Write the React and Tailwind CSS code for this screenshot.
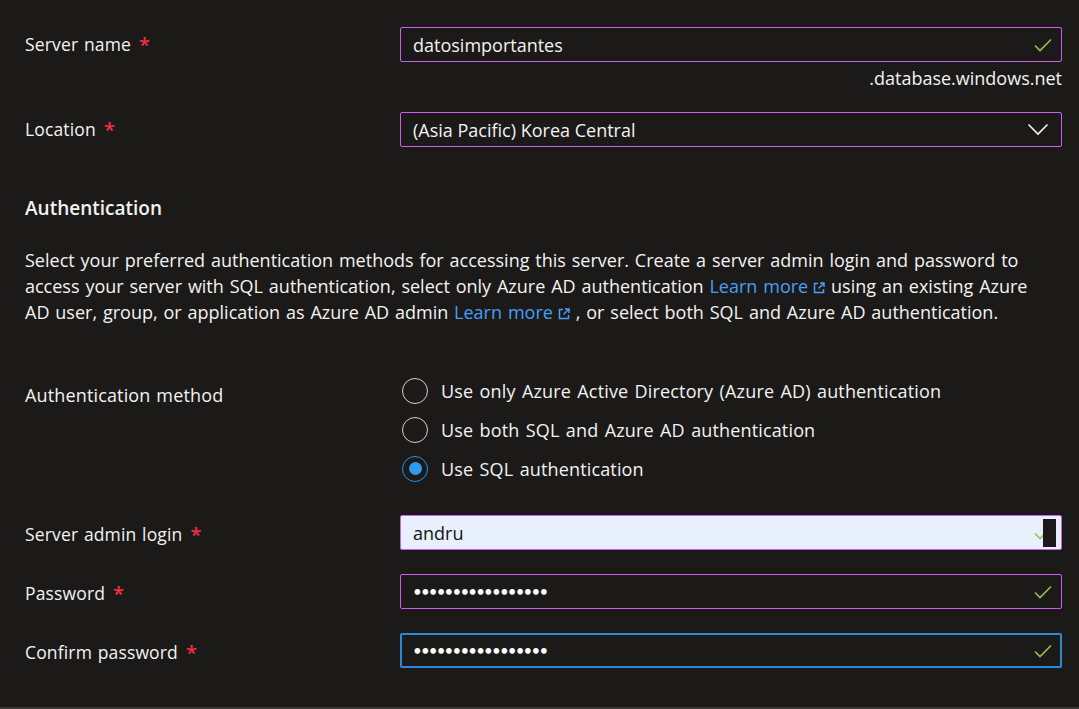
import React from "react";

const Check = () => (
  <svg width="20" height="16" viewBox="0 0 20 16" className="shrink-0">
    <polyline points="2,8.5 7,13.5 18,2.5" fill="none" stroke="#92c353" strokeWidth="1.6" />
  </svg>
);

const Chevron = () => (
  <svg width="22" height="13" viewBox="0 0 22 13" className="shrink-0">
    <polyline points="1.5,1.5 11,11 20.5,1.5" fill="none" stroke="#f3f2f1" strokeWidth="1.6" />
  </svg>
);

const Ext = () => (
  <svg width="12" height="12" viewBox="0 0 12 12" className="inline-block ml-[5px] align-[-1px]">
    <path d="M5 1.5H1.5v9h9V7" fill="none" stroke="#479ef5" strokeWidth="1.5" />
    <path d="M7 1h4v4M11 1L5.5 6.5" fill="none" stroke="#479ef5" strokeWidth="1.5" />
  </svg>
);

const Star = () => <span className="text-[#f1313f] ml-[8px] text-[20px] font-semibold align-[-1px]">*</span>;

const Label = ({ children, req = true, low = false }) => (
  <div
    className={"w-[375px] shrink-0 text-[17.5px] tracking-[0.15px] text-[#f3f2f1] " + (low ? "pt-[4px]" : "")}
    style={{ wordSpacing: "1px" }}
  >
    {children}
    {req && <Star />}
  </div>
);

const Box = ({ children, className }) => (
  <div className={"flex-1 h-[35px] flex items-center justify-between rounded-[2px] " + className}>{children}</div>
);

const Dots = () => (
  <span
    className="text-[15px] tracking-[-0.8px] text-white leading-none"
    style={{ fontFamily: "Lato, sans-serif" }}
  >
    •••••••••••••••••
  </span>
);

const Radio = ({ checked, children }) => (
  <div className="flex items-center h-[39px]">
    {checked ? (
      <div className="w-[26px] h-[26px] rounded-full border-[1.5px] border-[#2b8fe8] flex items-center justify-center shrink-0">
        <div className="w-[13px] h-[13px] rounded-full bg-[#2f9bf0]" />
      </div>
    ) : (
      <div className="w-[26px] h-[26px] rounded-full border-[1.5px] border-[#d2d0ce] shrink-0" />
    )}
    <span className="ml-[13px] text-[18px] tracking-[0.15px] text-[#f3f2f1]" style={{ wordSpacing: "1.5px" }}>
      {children}
    </span>
  </div>
);

export default function App() {
  return (
    <div
      className="w-[1079px] h-[709px] bg-[#1b1a19] text-[#f3f2f1] overflow-hidden flex flex-col"
      style={{ fontFamily: "'Open Sans', 'Noto Sans', sans-serif" }}
    >
      <div className="flex-1 pl-[25px] pr-[17px] pt-[27px] leading-[26px]">
        <div className="flex items-center">
          <Label>Server name</Label>
          <Box className="border border-[#cd5ff0] pl-[12px] pr-[8px]">
            <span className="text-[18px]">datosimportantes</span>
            <Check />
          </Box>
        </div>
        <div className="text-right text-[18px] mt-[4px] leading-[24px]">.database.windows.net</div>
        <div className="flex items-center mt-[22px]">
          <Label>Location</Label>
          <Box className="border border-[#cd5ff0] pl-[12px] pr-[12px]">
            <span className="text-[18px]">(Asia Pacific) Korea Central</span>
            <Chevron />
          </Box>
        </div>

        <div className="mt-[47px] text-[19px] font-semibold leading-[28px]">Authentication</div>

        <p className="mt-[25px] text-[18px] leading-[26px] whitespace-nowrap" style={{ wordSpacing: "1.2px" }}>
          Select your preferred authentication methods for accessing this server. Create a server admin login and password to
          <br />
          access your server with SQL authentication, select only Azure AD authentication{" "}
          <span className="text-[#479ef5]">
            Learn more
            <Ext />
          </span>{" "}
          using an existing Azure
          <br />
          AD user, group, or application as Azure AD admin{" "}
          <span className="text-[#479ef5]">
            Learn more
            <Ext />
          </span>{" "}
          , or select both SQL and Azure AD authentication.
        </p>

        <div className="flex mt-[46px]">
          <div className="w-[377px] shrink-0 pt-[11px]">
            <span className="text-[18px] tracking-[0.15px]" style={{ wordSpacing: "1px" }}>Authentication method</span>
          </div>
          <div className="flex flex-col">
            <Radio>Use only Azure Active Directory (Azure AD) authentication</Radio>
            <Radio>Use both SQL and Azure AD authentication</Radio>
            <Radio checked>Use SQL authentication</Radio>
          </div>
        </div>

        <div className="flex items-center mt-[27px]">
          <Label low>Server admin login</Label>
          <Box className="relative border border-[#cd5ff0] bg-[#e8f0fe] pl-[12px] pr-[8px]">
            <span className="text-[18px] text-[#111]">andru</span>
            <Check />
            <div className="absolute right-[5px] top-[3px] w-[13px] h-[28px] bg-[#1b1a19]" />
          </Box>
        </div>
        <div className="flex items-center mt-[24px]">
          <Label low>Password</Label>
          <Box className="border border-[#cd5ff0] pl-[12px] pr-[8px]">
            <Dots />
            <Check />
          </Box>
        </div>
        <div className="flex items-center mt-[24px]">
          <Label low>Confirm password</Label>
          <Box className="border-2 border-[#2b88d8] pl-[11px] pr-[7px]">
            <Dots />
            <Check />
          </Box>
        </div>
      </div>
      <div className="h-[2px] bg-[#3b3a39]" />
    </div>
  );
}
